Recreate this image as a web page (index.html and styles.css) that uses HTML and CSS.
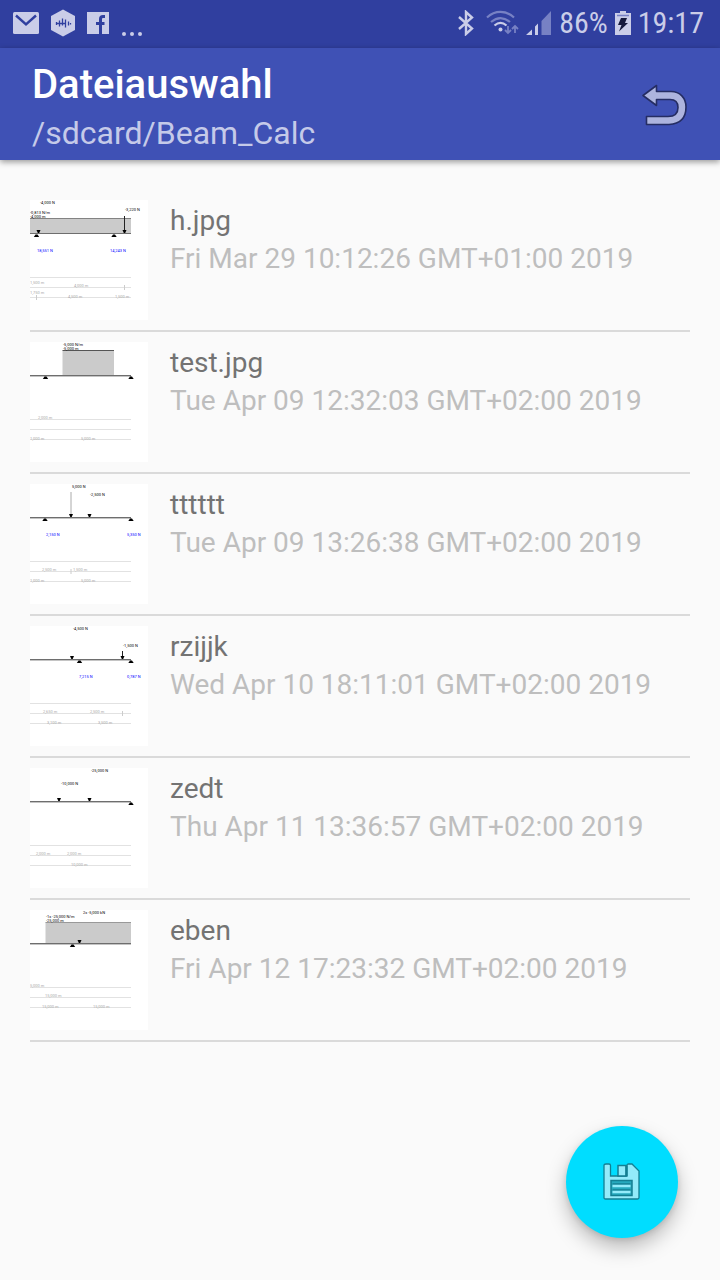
FILE: index.html
```html
<!DOCTYPE html>
<html lang="de">
<head>
<meta charset="utf-8">
<meta name="viewport" content="width=device-width, initial-scale=1">
<title>Dateiauswahl</title>
<link rel="stylesheet" href="styles.css">
</head>
<body>
<svg class="symbols" aria-hidden="true">
  <defs>
    <path id="load" d="M-2 -3h4L.7 0h-1.4z"/>
    <path id="support" d="M-1 .5h2l1.7 2.5h-5.4z"/>
    <path id="dims" d="M0 77.5h101M0 87.5h101M0 97.5h101" stroke="#e2e2e2"/>
    <g id="beam"><path d="M0 33.5h101" stroke="#6e6e6e"/><path d="M0 34.5h101" stroke="#c4c4c4"/></g>
  </defs>
</svg>

<div class="status">
  <div class="status-group notices">
    <svg width="26" height="22" viewBox="0 0 26 22"><rect width="26" height="22" rx="1.5" fill="#cacde8"/><path d="M3 3.5l10 9 10-9" fill="none" stroke="#303f9f" stroke-width="2.4"/></svg>
    <svg width="24" height="28" viewBox="0 0 24 28"><path d="M12 0.5l12 6.5v14l-12 6.5L0 21V7z" fill="#cacde8"/><path d="M5.500 13v3M8.500 11.500v6M11.500 9.500v7M14.500 10.500v8M17.500 12.500v4M19.500 14v1.500M5 14.500h10" stroke="#303f9f" stroke-width="1.300" fill="none"/></svg>
    <svg width="22" height="22" viewBox="0 0 22 22"><path fill="#cacde8" d="M0 0h22v22H0z"/><path d="M18 4.500h-2c-1.800 0-2.500.8-2.500 2.500v15M9 11.500h8.500" stroke="#303f9f" stroke-width="3" fill="none"/></svg>
    <svg class="dots" width="22" height="6" viewBox="0 0 22 6"><g fill="#cacde8"><circle cx="3" cy="3" r="2"/><circle cx="11" cy="3" r="2"/><circle cx="19" cy="3" r="2"/></g></svg>
  </div>
  <div class="status-group system">
    <svg width="18" height="26" viewBox="0 0 18 26"><path d="M2 7l13 11.500L9 24V2l6 5.500L2 19" fill="none" stroke="#cacde8" stroke-width="2.400"/></svg>
    <svg class="wifi" width="33" height="26" viewBox="0 0 33 26"><g fill="none" stroke-width="2.200"><path d="M1 7.500C9 0 20 0 28 7.500M5 12c6-5 13-5 19 0" stroke="#7781c4"/><path d="M8.500 15.500c4-3.500 8-3.500 12 0" stroke="#cacde8"/><path d="M22 16v7M19 20l3 3 3-3M29 23v-7M26 19l3-3 3 3" stroke="#7781c4" stroke-width="1.800"/></g><circle cx="14.500" cy="19.500" r="2" fill="#cacde8"/></svg>
    <svg width="26" height="26" viewBox="0 0 26 26"><path d="M15.500 11l9.500-10v24h-9.500z" fill="#7781c4"/><path d="M0 25l6-5.500V25zM9 16.500l3-3V25H9z" fill="#cacde8"/></svg>
    <span class="percent">86%</span>
    <svg width="16" height="26" viewBox="0 0 16 26"><path d="M5 1h6v2h5v22H0V3h5z" fill="#cacde8"/><path d="M2 5.500h12" stroke="#7781c4" stroke-width="1.500"/><path d="M6 8h6l-2 5h3L4 21.500 6.500 15H3z" fill="#15193c"/></svg>
    <span class="clock">19:17</span>
  </div>
</div>

<header class="toolbar">
  <div class="titles">
    <h1>Dateiauswahl</h1>
    <p>/sdcard/Beam_Calc</p>
  </div>
  <button class="back" type="button" aria-label="Zurück">
    <svg width="48" height="44" viewBox="0 0 48 44"><path d="M3 12.500L16.500 2.500v6H31c9 0 15 6.500 15 15.500 0 12-7 17-17 17.500H6.500v-8H28c7 0 10-3.500 10-9 0-5-3-8-8-8H16.500v6z" fill="#adb4de" stroke="#252d63" stroke-width="1.600" stroke-linejoin="round"/></svg>
  </button>
</header>

<main>
  <ul class="files">
    <li>
      <svg class="thumb" viewBox="0 0 118 120">
        <path d="M0 18.500h101V34H0z" fill="#cbcbcb"/><path d="M0 18.500h101M0 33.500h101" stroke="#6e6e6e"/><path d="M0 18.500h101" stroke="#999" stroke-width=".5"/>
        <path d="M94.500 16v16" stroke="#222"/>
        <use href="#load" x="8.500" y="33"/><use href="#load" x="94.500" y="33"/><use href="#support" x="6.500" y="34"/><use href="#support" x="84" y="34"/>
        <text x="10" y="4">-4,000 N</text><text x="95" y="11">-3,220 N</text><text x="0" y="14">-0,813 N/m</text><text x="0" y="18">-4,000 m</text>
        <g class="force"><text x="7" y="52">18,551 N</text><text x="80" y="52">14,243 N</text></g>
        <use href="#dims"/><path d="M94.500 85v5M6.500 95v5" stroke="#ccc"/>
        <g class="dim"><text x="0" y="84">1,500 m</text><text x="44" y="87">4,000 m</text><text x="0" y="94">1,750 m</text><text x="38" y="98">4,500 m</text><text x="85" y="98">1,500 m</text></g>
      </svg>
      <div class="info"><span class="name">h.jpg</span><time class="date">Fri Mar 29 10:12:26 GMT+01:00 2019</time></div>
    </li>
    <li>
      <svg class="thumb" viewBox="0 0 118 120">
        <path d="M32.500 8.500H84V34H32.500z" fill="#cbcbcb"/><path d="M32.500 8.500H84" stroke="#555"/>
        <use href="#beam"/><use href="#support" x="15.500" y="34"/><use href="#support" x="101" y="34"/>
        <text x="33" y="4">-5,000 N/m</text><text x="33" y="8">-5,000 m</text>
        <use href="#dims"/>
        <g class="dim"><text x="8" y="77">2,000 m</text><text x="0" y="98">1,000 m</text><text x="51" y="98">5,000 m</text></g>
      </svg>
      <div class="info"><span class="name">test.jpg</span><time class="date">Tue Apr 09 12:32:03 GMT+02:00 2019</time></div>
    </li>
    <li>
      <svg class="thumb" viewBox="0 0 118 120">
        <path d="M41 8v23" stroke="#aaa"/>
        <use href="#beam"/><use href="#load" x="41" y="33"/><use href="#load" x="59.500" y="33"/><use href="#support" x="15" y="34"/><use href="#support" x="101" y="34"/>
        <text x="42" y="4">5,000 N</text><text x="60" y="12">-2,500 N</text>
        <g class="force"><text x="16" y="52">2,150 N</text><text x="97" y="52">5,350 N</text></g>
        <use href="#dims"/><path d="M41 85v5" stroke="#ccc"/>
        <g class="dim"><text x="12" y="87">2,500 m</text><text x="43" y="87">1,500 m</text><text x="0" y="98">1,000 m</text><text x="51" y="98">5,000 m</text></g>
      </svg>
      <div class="info"><span class="name">tttttt</span><time class="date">Tue Apr 09 13:26:38 GMT+02:00 2019</time></div>
    </li>
    <li>
      <svg class="thumb" viewBox="0 0 118 120">
        <path d="M92.500 25v7" stroke="#222"/>
        <use href="#beam"/><use href="#load" x="42" y="33"/><use href="#load" x="92.500" y="33"/><use href="#support" x="49.500" y="34"/><use href="#support" x="101" y="34"/>
        <text x="43" y="4">-4,500 N</text><text x="93" y="21">-1,500 N</text>
        <g class="force"><text x="49" y="52">7,215 N</text><text x="97" y="52">0,787 N</text></g>
        <use href="#dims"/><path d="M92.500 85v5" stroke="#ccc"/>
        <g class="dim"><text x="13" y="87">2,650 m</text><text x="60" y="87">2,500 m</text><text x="17" y="98">3,100 m</text><text x="68" y="98">3,500 m</text></g>
      </svg>
      <div class="info"><span class="name">rzijjk</span><time class="date">Wed Apr 10 18:11:01 GMT+02:00 2019</time></div>
    </li>
    <li>
      <svg class="thumb" viewBox="0 0 118 120">
        <use href="#beam"/><use href="#load" x="29" y="33"/><use href="#load" x="59.500" y="33"/><use href="#support" x="101" y="34"/>
        <text x="61" y="4">-25,000 N</text><text x="31" y="17">-10,000 N</text>
        <use href="#dims"/>
        <g class="dim"><text x="6" y="87">2,000 m</text><text x="37" y="87">2,000 m</text><text x="41" y="98">10,000 m</text></g>
      </svg>
      <div class="info"><span class="name">zedt</span><time class="date">Thu Apr 11 13:36:57 GMT+02:00 2019</time></div>
    </li>
    <li>
      <svg class="thumb" viewBox="0 0 118 120">
        <path d="M15.500 12.500H101V34H15.500z" fill="#cbcbcb"/><path d="M15.500 12.500H101" stroke="#999"/>
        <use href="#beam"/><use href="#load" x="49.500" y="33"/><use href="#support" x="42.500" y="34"/>
        <text x="53" y="4">2x -5,000 kN</text><text x="16" y="8">-1x -25,000 N/m</text><text x="16" y="12">-25,000 m</text>
        <use href="#dims"/>
        <g class="dim"><text x="0" y="77">5,000 m</text><text x="15" y="87">15,000 m</text><text x="12" y="98">15,000 m</text><text x="63" y="98">15,000 m</text></g>
      </svg>
      <div class="info"><span class="name">eben</span><time class="date">Fri Apr 12 17:23:32 GMT+02:00 2019</time></div>
    </li>
  </ul>
</main>

<button class="fab" type="button" aria-label="Speichern">
  <svg width="38" height="38" viewBox="0 0 38 38"><path d="M3 1h3q1.500 0 1.500 1.500V13H24V2.500Q24 1 25.500 1H29l7 7v26.500q0 1.500-1.500 1.500h-32Q1 36 1 34.500v-32Q1 1 3 1z" fill="#93ebfa" stroke="#147f92" stroke-width="1.300"/><path d="M15 2.500h8V13h-8z" fill="#93ebfa" stroke="#147f92" stroke-width="1.500"/><path d="M22.500 2.500h2V13h-2z" fill="#147f92"/><path d="M8 17.500h21v15H8z" fill="#26aabe" stroke="#147f92" stroke-width="1.500"/><path d="M9.500 21h18M9.500 27h18" stroke="#147f92" stroke-width="1.500"/><path d="M9.500 23h18M9.500 29h18" stroke="#93ebfa" stroke-width="2.500"/></svg>
</button>
</body>
</html>
```

FILE: styles.css
```css
* {
  box-sizing: border-box;
}

body {
  margin: 0;
  min-height: 100vh;
  background: #fafafa;
  font-family: Roboto, "Liberation Sans", sans-serif;
}

.symbols {
  position: absolute;
  width: 0;
  height: 0;
}

.status {
  display: flex;
  justify-content: space-between;
  align-items: center;
  height: 48px;
  padding: 0 16px 2px 13px;
  background: #303f9f;
}

.status-group {
  display: flex;
  align-items: center;
}

.notices {
  gap: 12px;
}

.dots {
  align-self: flex-end;
}

.system {
  gap: 7px;
  color: #cacde8;
  font-family: "Roboto Condensed", Roboto, sans-serif;
  font-size: 30px;
  line-height: 46px;
}

.wifi {
  margin-left: 4px;
}

.toolbar {
  display: flex;
  justify-content: space-between;
  align-items: center;
  padding: 13px 32px 3px;
  background: #3f51b5;
  box-shadow: 0 2px 6px rgba(0, 0, 0, 0.4);
}

.titles h1 {
  margin: 0;
  color: #fff;
  font-size: 40px;
  font-weight: 500;
  line-height: 48px;
}

.titles p {
  margin: 0;
  color: #c5cae9;
  font-size: 32px;
  line-height: 48px;
}

.back {
  display: flex;
  padding: 0 0 8px;
  border: 0;
  background: none;
}

.files {
  margin: 0;
  padding: 30px 30px 0;
  list-style: none;
}

.files li {
  display: flex;
  gap: 22px;
  padding: 10px 0;
  border-bottom: 2px solid #dadada;
}

.thumb {
  flex: none;
  width: 118px;
  height: 120px;
  background: #fff;
  font-size: 4px;
}

.force {
  fill: #00f;
}

.dim {
  fill: #aaa;
}

.info {
  display: flex;
  flex-direction: column;
  padding-top: 2px;
  font-size: 28px;
  line-height: 38px;
}

.name {
  color: #737373;
}

.date {
  color: #bebebe;
}

.fab {
  position: fixed;
  right: 42px;
  bottom: 42px;
  display: flex;
  align-items: center;
  justify-content: center;
  width: 112px;
  height: 112px;
  padding: 0;
  border: 0;
  border-radius: 50%;
  background: #00ddff;
  box-shadow: 0 10px 20px rgba(0, 0, 0, 0.25), 0 2px 6px rgba(0, 0, 0, 0.12);
}
```
